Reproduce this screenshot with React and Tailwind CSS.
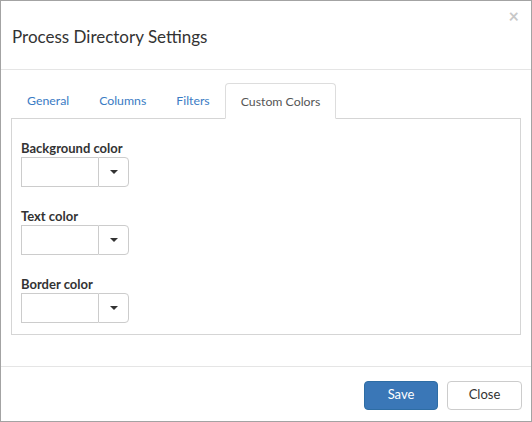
import { useState } from 'react';

const ColorField = ({ label }) => (
  <div className="flex flex-col">
    <label className="text-[13px] leading-[18px] font-bold text-[#333]">{label}</label>
    <div className="flex h-[30px]">
      <input
        type="text"
        className="w-[77px] h-full border border-[#ccc] border-r-0 bg-white outline-none"
      />
      <button className="w-[31px] h-full border border-[#ccc] rounded-r-[4px] bg-white flex items-center justify-center">
        <span className="w-0 h-0 border-l-[4px] border-r-[4px] border-t-[4px] border-l-transparent border-r-transparent border-t-[#333]" />
      </button>
    </div>
  </div>
);

const App = () => {
  const [tab, setTab] = useState('Custom Colors');
  const tabs = ['General', 'Columns', 'Filters', 'Custom Colors'];

  return (
    <div className="w-[532px] h-[422px] border border-[#a3a3a3] bg-white flex flex-col font-['Lato',sans-serif]">
      <div className="relative h-[69px] border-b border-[#e5e5e5] pl-[11px] pt-[24px] shrink-0">
        <h4 className="text-[17px] leading-[24px] text-[#333]">Process Directory Settings</h4>
        <button className="absolute right-[12px] top-[6px] text-[18px] leading-none text-[#c8c8c8] font-bold">×</button>
      </div>

      <div className="flex-1 px-[10px] pt-[13px]">
        <ul className="flex h-[35px] pl-[1px]">
          {tabs.map((t) =>
            t === tab ? (
              <li
                key={t}
                className="h-[36px] px-[15px] pt-[2px] border border-[#ddd] border-b-white rounded-t-[4px] bg-white text-[12.3px] text-[#555] flex items-center relative z-10 mb-[-1px]"
              >
                {t}
              </li>
            ) : (
              <li
                key={t}
                onClick={() => setTab(t)}
                className="h-[35px] px-[15px] pt-[2px] text-[12.3px] text-[#3a7bc4] flex items-center cursor-pointer"
              >
                {t}
              </li>
            )
          )}
        </ul>
        <div className="h-[217px] border border-[#d5d5d5] pl-[9px] pt-[20px] flex flex-col gap-[20px]">
          <ColorField label="Background color" />
          <ColorField label="Text color" />
          <ColorField label="Border color" />
        </div>
      </div>

      <div className="h-[55px] border-t border-[#e5e5e5] flex items-center justify-end gap-[9px] pr-[9px] pt-[2px] shrink-0">
        <button className="w-[74px] h-[29px] rounded-[4px] bg-[#3a77b7] border border-[#2e6da4] text-white text-[13px]">
          Save
        </button>
        <button className="w-[75px] h-[29px] rounded-[4px] bg-white border border-[#ccc] text-[#333] text-[13px]">
          Close
        </button>
      </div>
    </div>
  );
};

export default App;
